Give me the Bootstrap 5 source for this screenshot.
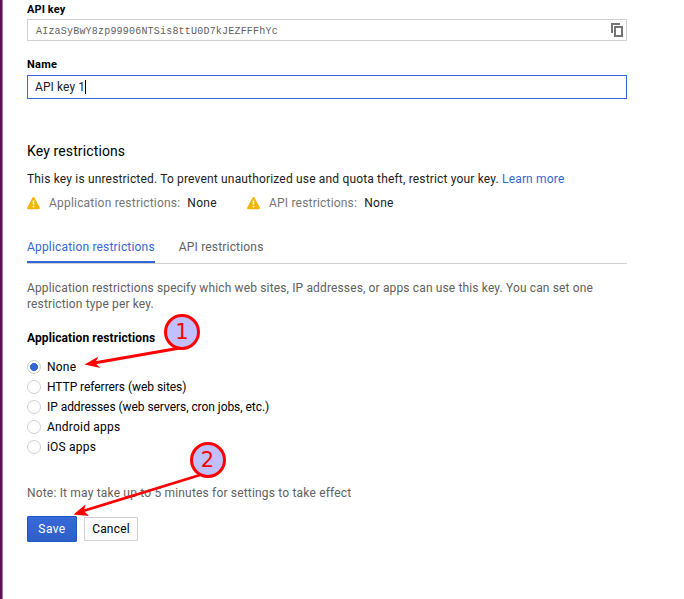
<!DOCTYPE html>
<html lang="en">
<head>
<meta charset="utf-8">
<title>API key</title>
<link href="https://cdn.jsdelivr.net/npm/bootstrap@5.3.0/dist/css/bootstrap.min.css" rel="stylesheet">
<style>
body{font:12px/16px Roboto,"Liberation Sans",sans-serif;color:#212121;letter-spacing:.2px;background:#fff;height:599px;overflow:hidden}
.page{width:684px;height:599px;border-left:2px solid #5c1055;box-shadow:inset 1px 0 #a57ca1;padding:2px 57px 0 25px}
.lbl{font-size:11px;font-weight:700;color:#000;letter-spacing:.1px}
.key-field{height:22px;margin-top:1px;border:1px solid #d0d0d0;padding:0 3px 0 8px}
.key-text{font:10px/18px "Liberation Mono",monospace;letter-spacing:.2px;color:#616161;padding-top:3px}
.name-label{margin-top:16px;letter-spacing:.3px}
.name-field{height:24px;margin-top:2px;border:1px solid #3367d6;padding:0 7px;line-height:22px;letter-spacing:.1px}
.caret{width:1px;height:14px;background:#000}
.sec{font-size:14px;line-height:20px;margin-top:42px;color:#000;letter-spacing:.12px}
.intro{margin-top:10px;letter-spacing:.17px}
.blue{color:#3367d6}
.muted{color:#757575}
.status{margin-top:8px}
.st-a{margin:0 7px 0 9px}
.st-n{margin-right:30px;letter-spacing:.3px}
.tabs{height:25px;margin-top:28px;border-bottom:1px solid #d0d0d0}
.tabs .nav-link{padding:0 0 6px;margin-right:24px;color:#616161;height:24px;border-bottom:2px solid transparent;line-height:16px;letter-spacing:.18px}
.tabs .nav-link.active{color:#3367d6;border-color:#3367d6}
.desc{margin-top:16px;color:#616161;letter-spacing:.14px}
.group{margin-top:18px;font-weight:700;color:#000;letter-spacing:.1px}
.options{margin-top:11px;color:#000}
.opt{height:20px;letter-spacing:.2px}
.opt-tight{letter-spacing:-.05px}
.dot{appearance:none;width:14px;height:14px;margin:0 6px 0 0;border:1px solid #d0d0d0;border-radius:50%;background:#fff}
.dot:checked{background:radial-gradient(circle,#3367d6 3.7px,transparent 4.3px)}
.note{margin-top:28px;color:#616161;letter-spacing:.18px}
.actions{margin-top:15px;gap:7px}
.actions .btn{font-size:12px;line-height:16px;padding:0;border-radius:1px;letter-spacing:.2px}
.actions .save{width:50px;height:26px;color:#fff;background:linear-gradient(#3769d8,#2f60c8);border:1px solid #1f57c8;letter-spacing:.4px}
.actions .cancel{width:54px;height:24px;color:#000;background:linear-gradient(#fff,#fafafa);border:1px solid #d0d0d0}
.overlay{left:0;top:0;pointer-events:none}
</style>
</head>
<body>
<main class="page">
  <div class="lbl">API key</div>
  <div class="key-field d-flex align-items-center justify-content-between">
    <span class="key-text">AIzaSyBwY8zp99906NTSis8ttU0D7kJEZFFFhYc</span>
    <svg width="12" height="14" viewBox="0 0 12 14" fill="none" stroke="#757575" stroke-width="2"><path d="M1 10V1h8M4 4h7v9H4z"/></svg>
  </div>
  <div class="lbl name-label">Name</div>
  <div class="name-field d-flex align-items-center"><span>API key 1</span><span class="caret"></span></div>

  <h2 class="sec mb-0 fw-normal">Key restrictions</h2>
  <p class="mb-0 intro">This key is unrestricted. To prevent unauthorized use and quota theft, restrict your key. <a class="blue text-decoration-none" href="#">Learn more</a></p>
  <div class="status d-flex align-items-center">
    <svg width="13" height="13" viewBox="0 0 13 13"><path d="M6.5 1.3 11.7 11H1.300z" fill="#f4b400" stroke="#f4b400" stroke-width="2.400" stroke-linejoin="round"/><path d="M6.500 3.500v4M6.500 8.700v1.800" stroke="#fff" stroke-width="1.600"/></svg>
    <span class="muted st-a">Application restrictions:</span><span class="st-n">None</span>
    <svg width="13" height="13" viewBox="0 0 13 13"><path d="M6.5 1.3 11.7 11H1.300z" fill="#f4b400" stroke="#f4b400" stroke-width="2.400" stroke-linejoin="round"/><path d="M6.500 3.500v4M6.500 8.700v1.800" stroke="#fff" stroke-width="1.600"/></svg>
    <span class="muted st-a">API restrictions:</span><span class="st-n">None</span>
  </div>

  <nav class="nav tabs flex-nowrap">
    <a class="nav-link active" href="#">Application restrictions</a>
    <a class="nav-link" href="#">API restrictions</a>
  </nav>
  <p class="desc mb-0">Application restrictions specify which web sites, IP addresses, or apps can use this key. You can set one<br>restriction type per key.</p>
  <div class="group">Application restrictions</div>
  <div class="options">
    <label class="opt d-flex align-items-center"><input class="dot" type="radio" name="r" checked>None</label>
    <label class="opt opt-tight d-flex align-items-center"><input class="dot" type="radio" name="r">HTTP referrers (web sites)</label>
    <label class="opt opt-tight d-flex align-items-center"><input class="dot" type="radio" name="r">IP addresses (web servers, cron jobs, etc.)</label>
    <label class="opt d-flex align-items-center"><input class="dot" type="radio" name="r">Android apps</label>
    <label class="opt d-flex align-items-center"><input class="dot" type="radio" name="r">iOS apps</label>
  </div>
  <p class="note mb-0">Note: It may take up to 5 minutes for settings to take effect</p>
  <div class="actions d-flex align-items-center">
    <button class="btn save">Save</button>
    <button class="btn cancel">Cancel</button>
  </div>
</main>
<svg class="overlay position-absolute" width="684" height="599" viewBox="0 0 684 599">
  <g stroke="#f00" stroke-width="2.800"><path d="M180 348 94 363M200 475 83 511"/></g>
  <g fill="#f00"><path d="M84.500 364.500 98.500 356.500 95 363 100.500 368zM73.500 514.500 85.500 504.500 84 511 89 516z"/></g>
  <g fill="#c0c0ff" stroke="#f00" stroke-width="3"><circle cx="182" cy="332" r="16.500"/><circle cx="208" cy="460" r="16.500"/></g>
  <g fill="#f00" font-family="DejaVu Sans" font-size="21" text-anchor="middle" letter-spacing="0"><text x="182" y="339">1</text><text x="207.500" y="467">2</text></g>
</svg>
<script src="https://cdn.jsdelivr.net/npm/bootstrap@5.3.0/dist/js/bootstrap.bundle.min.js"></script>
</body>
</html>
